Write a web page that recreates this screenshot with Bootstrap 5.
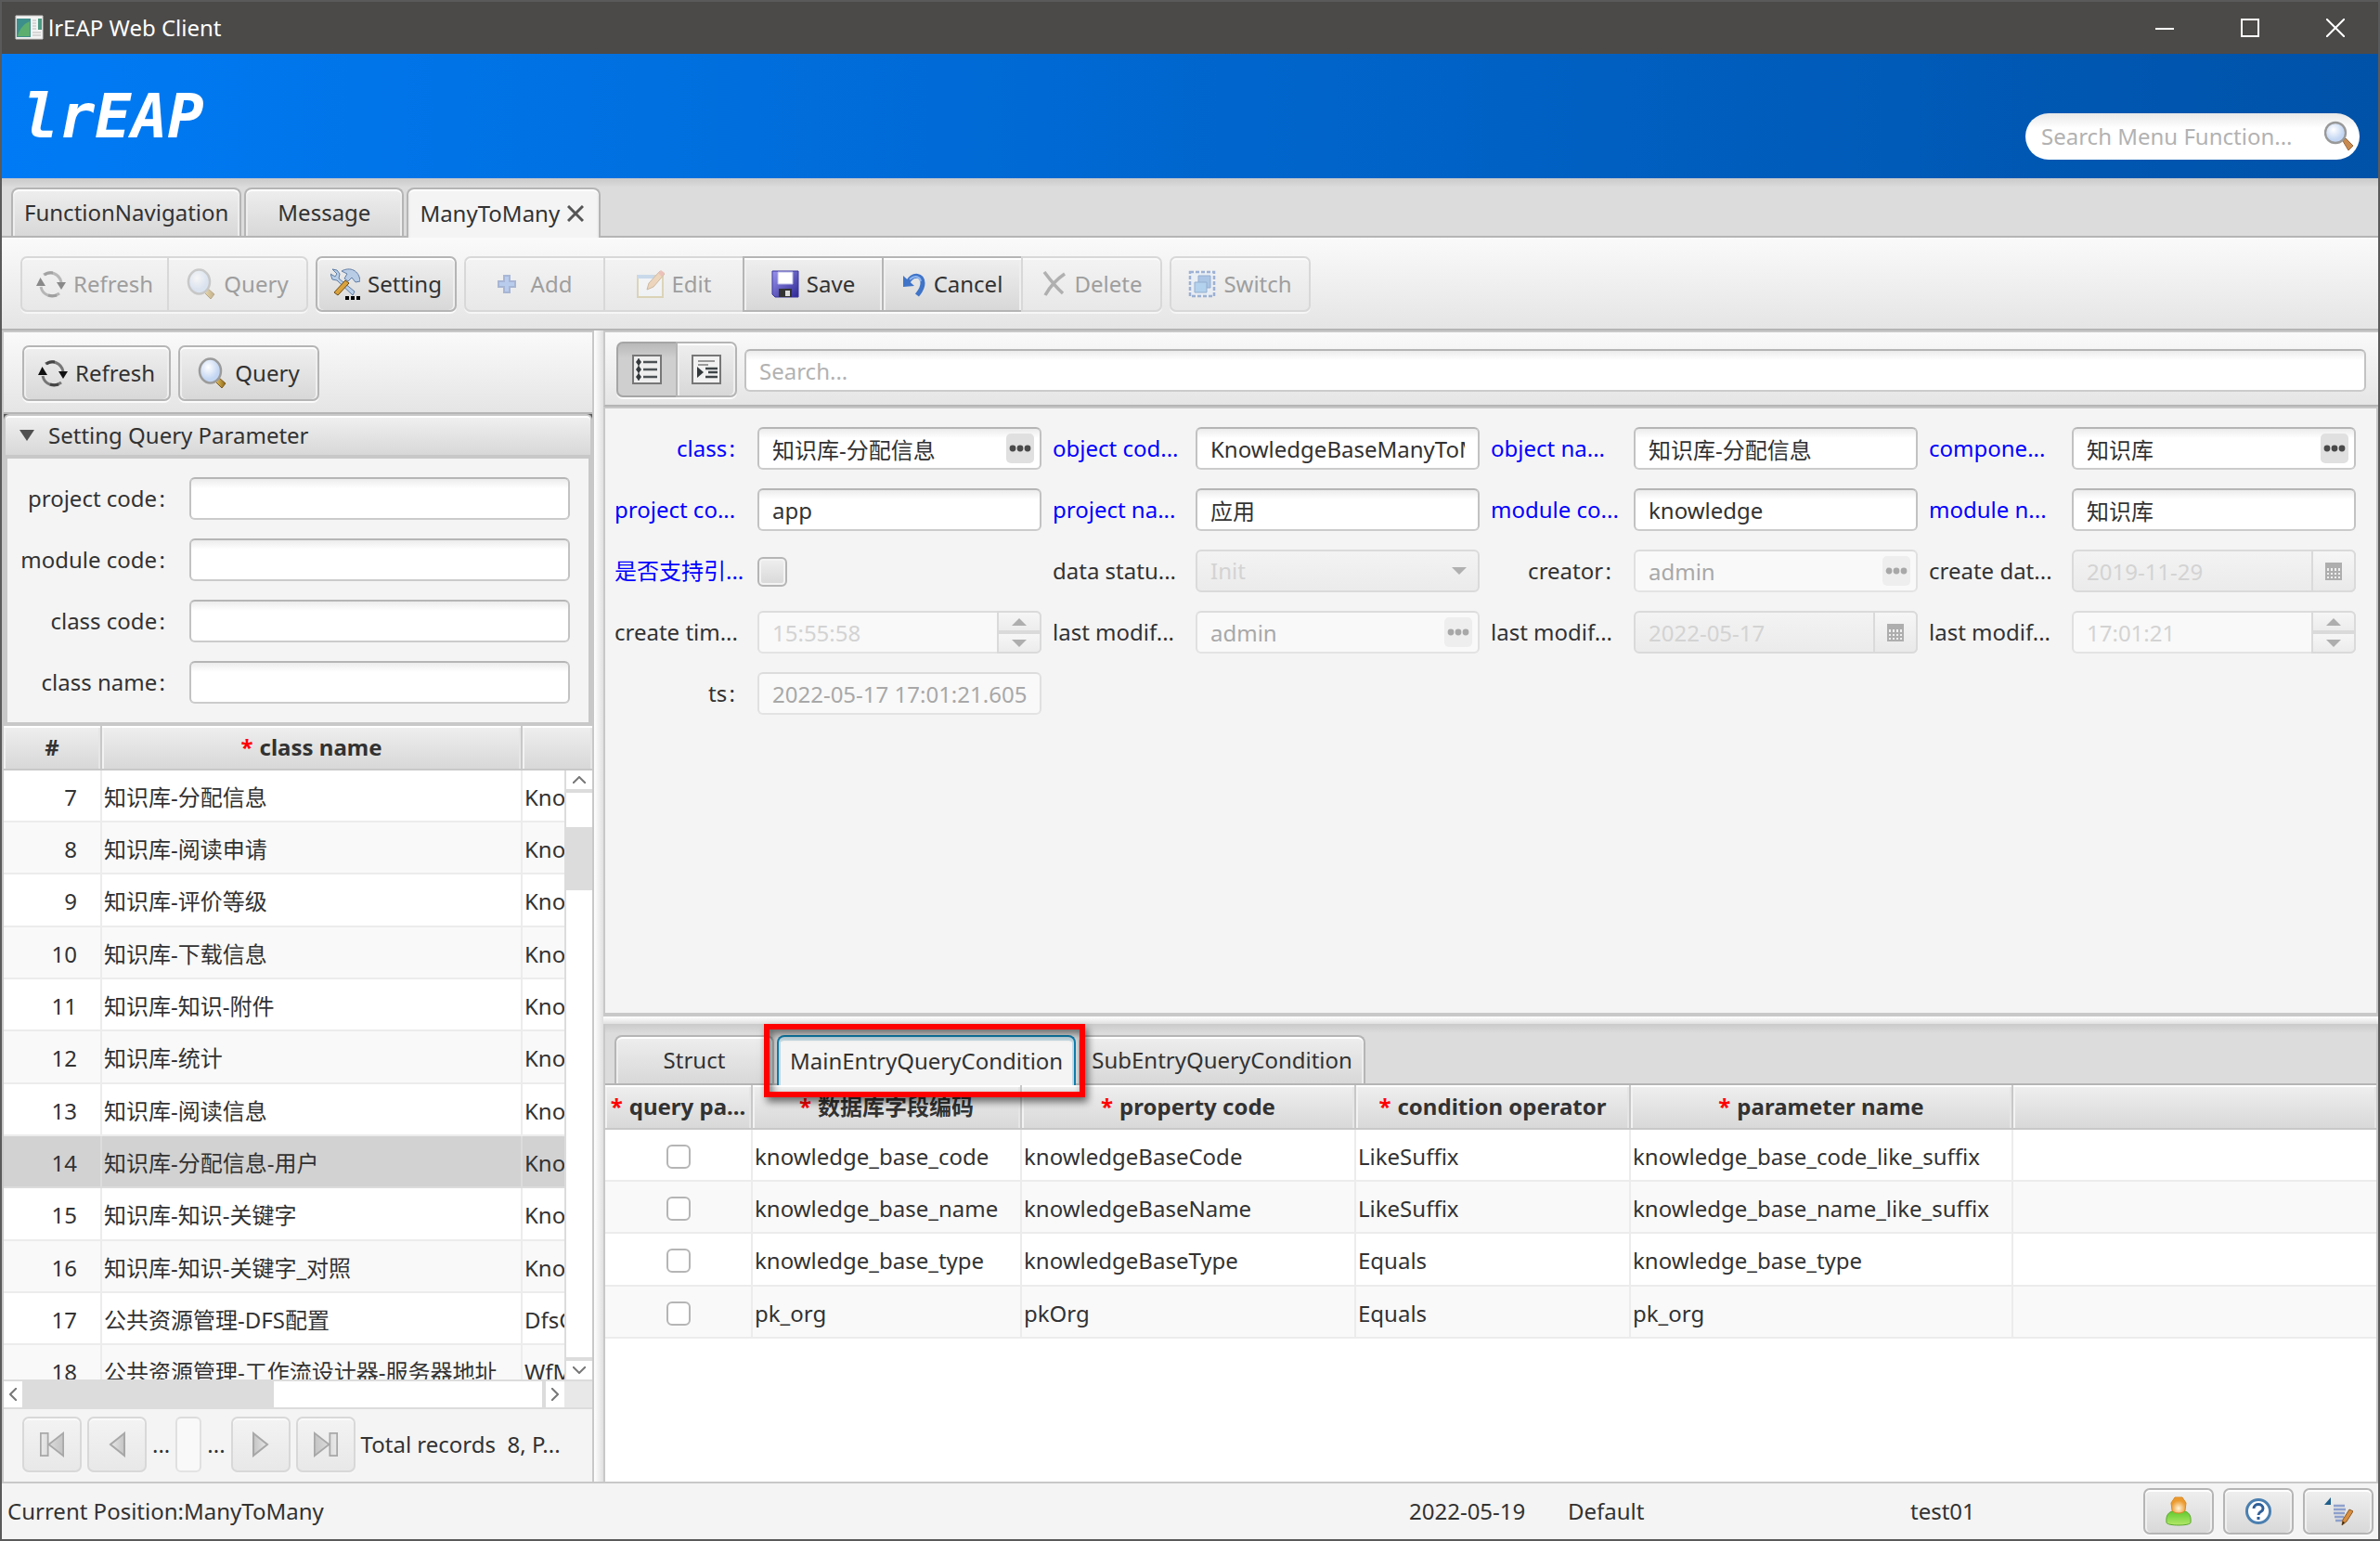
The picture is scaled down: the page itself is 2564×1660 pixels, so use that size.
<!DOCTYPE html>
<html lang="en">
<head>
<meta charset="utf-8">
<meta name="viewport" content="width=device-width, initial-scale=1">
<title>lrEAP Web Client</title>
<link href="https://cdn.jsdelivr.net/npm/bootstrap@5.3.0/dist/css/bootstrap.min.css" rel="stylesheet">
<style>
:root{--line:#c8c8c8;--edge:#b5b5b5;--panel:#f4f4f4;--ink:#323232}
body{font-family:"Noto Sans","Noto Sans CJK SC",sans-serif;font-size:24px;line-height:32px;color:var(--ink);background:#5a5a5a;border:solid #5a5a5a;border-width:0 2px 2px}
svg{display:block;flex:none}
/* window frame */
.titlebar{height:58px;background:#4c4a48;border-top:2px solid #5a5a5a;color:#fff;padding-left:12px}
.winbtn{width:92px;height:56px;background:none;border:0;color:#fff;display:flex;align-items:center;justify-content:center}
.brandbar{height:134px;background:linear-gradient(90deg,#007bf5,#0052a8);padding:0 20px 20px 22px}
.brandname{font:italic bold 65px/72px "DejaVu Sans Mono",monospace;color:#fff;margin-top:32px}
.menusearch{width:360px;height:50px;border-radius:25px;background:linear-gradient(#e8e8e8,#fff 16px);padding:0 6px 0 17px}
.menusearch input{border:0;background:none;outline:0;padding:0;min-width:0;flex:1;color:var(--ink)}
::placeholder{color:#b2b2b2!important;opacity:1!important}
/* tabs */
.tabstrip{background:linear-gradient(#cacaca,#dcdcdc 10px);border-bottom:2px solid var(--edge);gap:3px}
.tabstrip .nav-link{min-width:172px;height:52px;margin-bottom:0;padding:0 12px;border:2px solid var(--edge);border-bottom:0;border-radius:8px 8px 0 0;background:linear-gradient(#eee,#d8d8d8);box-shadow:inset 0 2px #fff,inset 2px 0 #eee,inset -2px 0 #eee;color:var(--ink);display:flex;align-items:center;justify-content:center}
.tabstrip .nav-link.active{height:54px;margin-bottom:-2px;background:var(--panel);border-color:var(--edge);color:var(--ink)}
.tabs-main{height:64px;padding:10px 10px 0}
.tabs-main .nav-link.active{padding-right:16px}
.tabs-sub{height:66px;padding:12px 10px 0}
.tabs-sub .nav-link.active{border-color:#0f7fae;box-shadow:inset 0 4px #c5dbe4,inset 2px 0 #c5dbe4,inset -2px 0 #c5dbe4}
/* toolbars and buttons */
.toolstrip{background:linear-gradient(#fafafa,#e5e5e5);border-bottom:2px solid var(--edge)}
.tools-main{height:100px;padding:20px}
.tools-left{height:88px;padding:14px 20px}
.tools-right{height:82px;padding:10px 13px 0 12px;border-top:2px solid var(--line);border-left:2px solid var(--line)}
.fxbtn{--bs-btn-padding-x:0;--bs-btn-padding-y:0;height:60px;border:2px solid var(--edge);border-radius:7px;background:linear-gradient(#efefef,#d8d8d8);box-shadow:inset 0 2px #fff,inset 2px 0 #efefef,inset -2px 0 #efefef,0 2px #fbfbfb;color:var(--ink);font-size:24px;line-height:32px;display:flex;align-items:center;justify-content:center;gap:8px}
.fxbtn:disabled{background:linear-gradient(#f3f3f3,#e8e8e8);border-color:#d8d8d8;color:#9e9e9e;opacity:1;box-shadow:inset 0 2px #fafafa,0 2px #f6f6f6}
.fxbtn:disabled svg{opacity:.45}
.btn-group .fxbtn{flex:none}
.btn-group>.fxbtn:not(:first-child){margin-left:-2px!important}
.fxbtn.pressed{background:linear-gradient(#b9b9b9,#cfcfcf 16px);box-shadow:0 2px #fbfbfb;border-color:#a5a5a5}
.w-tool{width:152px}
.w-wide{width:160px}
.w-toggle{width:66px}
/* fields */
.fld{height:46px;border:2px solid;border-color:#b5b5b5 #c2c2c2 #cbcbcb;border-radius:6px;background:linear-gradient(#ececec,#fff 10px);padding:0 14px;font-size:24px;line-height:32px;color:var(--ink)}
.fld:disabled{background:#f9f9f9;border-color:#dcdcdc #e0e0e0 #e3e3e3;color:#a8a8a8;opacity:1}
.fld.faint:disabled{color:#d3d3d3}
.fld.shade:disabled{background:linear-gradient(#f3f3f3,#ebebeb);border-color:#dadada}
.wrapfld{position:relative}
.dots{position:absolute;right:8px;top:7px;width:30px;height:32px;border:0;border-radius:5px;background:#e0e0e0;padding:0;display:flex;align-items:center;justify-content:center;color:#4a4a4a}
.dots:disabled{background:#eee;color:#a8a8a8}
.side{position:absolute;right:0;top:0;width:48px;height:46px;border:2px solid #dadada;border-radius:0 6px 6px 0;background:linear-gradient(#f6f6f6,#e9e9e9);padding:0;color:#aeaeae;display:flex;align-items:center;justify-content:center}
.steps{position:absolute;right:0;top:0;width:48px;height:46px;display:grid;grid-template-rows:1fr 1fr}
.steps button{border:2px solid #dadada;background:linear-gradient(#f6f6f6,#ececec);padding:0;color:#aeaeae;display:flex;align-items:center;justify-content:center}
.steps button:first-child{border-radius:0 6px 0 0}
.steps button:last-child{border-radius:0 0 6px 0}
.caret{position:absolute;right:14px;top:19px;color:#b0b0b0;pointer-events:none}
select.fld{appearance:none;-webkit-appearance:none;width:100%}
/* left side */
.leftpane{width:638px;border:solid var(--line);border-width:2px 2px 0}
.foldhead{height:44px;border:2px solid var(--line);border-bottom:0;border-radius:6px 6px 0 0;background:linear-gradient(#f0f0f0,#d8d8d8);box-shadow:inset 0 2px #fff;padding:0 0 0 15px;width:100%;text-align:left;display:flex;align-items:center;gap:15px;color:var(--ink);flex:none}
.foldbody{flex:none;border:4px solid var(--line);background:var(--panel);padding:20px 20px 20px 0;display:grid;grid-template-columns:170px 1fr;row-gap:20px;column-gap:26px}
.foldbody label{text-align:right;line-height:46px;white-space:nowrap}
.listarea{flex:1 1 0;min-height:0}
.splitv{width:10px;flex:none;background:linear-gradient(90deg,#fff,#e0e0e0)}
.splith{height:8px;background:linear-gradient(#fff,#e0e0e0);flex:none}
/* tables */
.grid{table-layout:fixed;width:100%;margin:0;border-collapse:separate;border-spacing:0}
.grid th{height:48px;padding:0 4px;text-align:center;font-weight:700;white-space:nowrap;background:linear-gradient(#efefef,#d8d8d8);border-right:2px solid var(--line);border-bottom:2px solid var(--line);box-shadow:inset 0 2px #fff,inset 2px 0 #f2f2f2,inset -2px 0 #e6e6e6}
.grid th:last-child{border-right:0}
.grid td{height:56px;padding:3px 2px 0;white-space:nowrap;overflow:hidden;border-bottom:2px solid #ececec;border-right:2px solid #ececec;background:#fff;line-height:32px;vertical-align:middle}
.grid td:last-child{border-right:0}
.grid tr:nth-child(3n) td{height:57px}
.grid tr:nth-child(even) td{background:#f9f9f9}
.grid tr.picked td{background:#d2d2d2;border-color:#dcdcdc}
.grid .num{text-align:right;padding-right:25px}
.req{color:#f00;margin-right:7px}
.cellcheck{width:26px;height:26px;border:2px solid #b5b5b5;border-radius:6px;background:#fff;display:block;margin:0 auto}
.bigcheck{width:32px;height:32px;margin:8px 0 0;border:2px solid #b5b5b5;border-radius:5px;background:linear-gradient(#efefef,#d8d8d8);box-shadow:inset 0 0 0 2px #f3f3f3}
/* scroll bars */
.vbar{position:absolute;right:0;top:48px;bottom:0;width:30px;background:#fff;border-left:2px solid #dcdcdc;display:flex;flex-direction:column}
.hbar{height:32px;border:solid #dcdcdc;border-width:2px 0;background:#fff;flex:none}
.barbtn{border:0 solid #dcdcdc;background:#fff;padding:0;color:#777;display:flex;align-items:center;justify-content:center}
.barbtn.v{height:24px}.barbtn.h{width:20px}
.barbtn.first{border-bottom-width:4px}
.barbtn.last{border-top-width:4px}
.barbtn.end{width:24px;border-left-width:4px}
.thumb{background:#dcdcdc}
.barcorner{width:30px;background:#e8e8e8}
.pager{height:78px;background:var(--panel);padding:8px 0 0 20px;gap:6px;align-items:flex-start}
.pager .fxbtn{width:64px;flex:none}
.pager .fxbtn svg{opacity:.6}
.pager span{line-height:60px;white-space:pre}
.pager input{width:28px;height:60px;padding:0;flex:none}
.mirror{transform:scaleX(-1)}
/* form */
.formpane{background:var(--panel);border:solid var(--line);border-width:2px 2px 4px;padding:20px 22px 0 10px}
.formgrid{display:grid;grid-template-columns:repeat(4,142px minmax(0,1fr));gap:20px 12px}
.formgrid label{line-height:46px;white-space:nowrap}
.formgrid label.short{text-align:right;padding-right:12px}
.must{color:#00f}
.upper{flex:3 1 0;min-height:0}.lower{flex:2 1 0;min-height:0;border:solid var(--line);border-width:0 2px}
.ring{position:absolute;left:-14px;right:-10px;top:-12px;height:79px;border:6px solid #f00;box-shadow:3px 5px 8px rgba(0,0,0,.55),inset 3px 5px 8px rgba(0,0,0,.5);z-index:3;pointer-events:none}
/* status */
.statusbar{height:62px;background:var(--panel);border-top:2px solid var(--line);flex:none;padding:0 5px 0 6px}
.statusbar .fxbtn{width:76px;height:50px}
.statusbtns{gap:10px}
.st-date{width:171px}.st-name{width:369px}.st-user{width:251px}
</style>
</head>
<body class="vh-100 d-flex flex-column overflow-hidden">
<svg width="0" height="0" class="position-absolute" aria-hidden="true">
<defs>
<radialGradient id="glass" cx=".4" cy=".35"><stop offset="0" stop-color="#fff"/><stop offset="1" stop-color="#c3d6f3"/></radialGradient>
<linearGradient id="gold" x1="0" x2="1"><stop offset="0" stop-color="#f2d06c"/><stop offset="1" stop-color="#8d6516"/></linearGradient>
<linearGradient id="disk" x1="0" y1="0" x2="1" y2="1"><stop offset="0" stop-color="#9a94ee"/><stop offset="1" stop-color="#2d2794"/></linearGradient>
<linearGradient id="green" x1="0" y1="0" x2="0" y2="1"><stop offset="0" stop-color="#5cc82b"/><stop offset="1" stop-color="#b4e86a"/></linearGradient>
<radialGradient id="face" cx=".5" cy=".7"><stop offset="0" stop-color="#fff3da"/><stop offset="1" stop-color="#ec9a2e"/></radialGradient>
<linearGradient id="steel" x1="0" y1="0" x2="1" y2="0"><stop offset="0" stop-color="#e8e8e8"/><stop offset="1" stop-color="#a8a8a8"/></linearGradient>
</defs>
<symbol id="i-refresh" viewBox="0 0 32 32"><g fill="none" stroke-width="3"><path d="M8 6c7-5 17-1 19 8" stroke="#777"/><path d="M25 26c-8 6-18 2-20-7" stroke="#777"/><path d="M9 6c3-2 6-2.500 9-2" stroke="#444"/><path d="M22 28c-3 1-6 1-9 0" stroke="#444"/></g><path d="M0 18l4.500-9 5.500 9zM22 14h10l-5 8z" fill="#111"/></symbol>
<symbol id="i-query" viewBox="0 0 32 34"><path d="M18 25l5-3 7 6-4 5z" fill="url(#gold)" stroke="#7d5a1a"/><ellipse cx="13.500" cy="14.500" rx="11.500" ry="13" fill="url(#glass)" stroke="#9b9b9b" stroke-width="2.500"/></symbol>
<symbol id="i-lens" viewBox="0 0 32 34"><path d="M20 22l3-3 8 8-5 5z" fill="#c98a50" stroke="#9a6a3c"/><circle cx="12" cy="13" r="11" fill="url(#glass)" stroke="#999" stroke-width="2.400"/></symbol>
<symbol id="i-setting" viewBox="0 0 32 34"><path d="M2 1l5 1 3 4-1 5 17 14-2 4L7 13l-5-1-2-6 5 3 2-3z" fill="#b9cfe8" stroke="#5f7da4"/><path d="M12 3c9-5 19-1 20 11l-5 1-4-5-4 4-4-3 3-5z" fill="#b9cce6" stroke="#5f7da4"/><path d="M16 13l4 3L8 29l-4-3z" fill="#d9a23c" stroke="#6d4a12"/><path d="M16 30h4v4h-4zM22 30h4v4h-4zM28 30h4v4h-4z" fill="#000"/></symbol>
<symbol id="i-add" viewBox="0 0 20 20"><path d="M7 1h6v6h6v6h-6v6H7v-6H1V7h6z" fill="#7aa5ee" stroke="#5674b8" stroke-width="2"/></symbol>
<symbol id="i-edit" viewBox="0 0 30 30"><path d="M1 6h27v23H1z" fill="#f6fbff" stroke="#c9b87a" stroke-width="2"/><path d="M1 5h18v4H1z" fill="#9cc0e6"/><path d="M11 21l2-7L25 1l5 3-12 14z" fill="#eab880" stroke="#a87a48"/><path d="M23 3l3-3 4 3-3 4z" fill="#e88a7a"/></symbol>
<symbol id="i-save" viewBox="0 0 30 30"><path d="M1 1h28v28H4l-3-3z" fill="url(#disk)" stroke="#3a35a0"/><path d="M7 2h16v13H7z" fill="#fff" stroke="#b6b6e6"/><path d="M8 20h14v9H8z" fill="#333"/><path d="M15 22h5v6h-5z" fill="#ddd"/></symbol>
<symbol id="i-cancel" viewBox="0 0 26 28"><path d="M6 12C12 2 22 4 22 13c0 6-3 9-6 13" fill="none" stroke="#3f74c8" stroke-width="5"/><path d="M1 5v12l12-1z" fill="#3f74c8"/><path d="M8 9c6-5 11-3 12 2" fill="none" stroke="#8fb6f0" stroke-width="2"/></symbol>
<symbol id="i-delete" viewBox="0 0 28 28"><path d="M3 1c6 8 12 16 20 23M25 3C16 9 9 17 4 26" fill="none" stroke="#666" stroke-width="3.500"/></symbol>
<symbol id="i-switch" viewBox="0 0 30 30"><path d="M2 2h26v26H2z" fill="#e4effd" stroke="#3c69b8" stroke-width="2.500" stroke-dasharray="4 2"/><path d="M11 6h13v13H11z" fill="#5b94dc" stroke="#2d63ad"/><path d="M7 13h13v11H7z" fill="#6eb2ee" stroke="#2d63ad"/></symbol>
<symbol id="i-first" viewBox="0 0 30 30"><path d="M1 1h9v28H1zM29 1v28L11 15z" fill="url(#steel)" stroke="#7a7a7a" stroke-width="2"/></symbol>
<symbol id="i-prev" viewBox="0 0 18 28"><path d="M17 2v24L2 14z" fill="url(#steel)" stroke="#7a7a7a" stroke-width="2"/></symbol>
<symbol id="i-dots" viewBox="0 0 24 8"><circle cx="4" cy="4" r="3.400"/><circle cx="12" cy="4" r="3.400"/><circle cx="20" cy="4" r="3.400"/></symbol>
<symbol id="i-cal" viewBox="0 0 18 19"><path fill-rule="evenodd" d="M0 0h18v19H0zM2 6h2v3H2zm4 0h2v3H6zm4 0h2v3h-2zm4 0h2v3h-2zM2 11h2v2H2zm4 0h2v2H6zm4 0h2v2h-2zm4 0h2v2h-2zM2 15h2v2H2zm4 0h2v2H6zm4 0h2v2h-2zm4 0h2v2h-2z" fill="currentColor"/></symbol>
<symbol id="i-up" viewBox="0 0 16 8"><path d="M0 8l8-8 8 8z" fill="currentColor"/></symbol>
<symbol id="i-down" viewBox="0 0 16 8"><path d="M0 0l8 8 8-8z" fill="currentColor"/></symbol>
</svg>

<header class="flex-shrink-0">
<div class="titlebar d-flex align-items-center">
<svg width="34" height="28" viewBox="0 0 34 28" class="me-1"><path d="M3 1h29v25H3z" fill="#f3f3f3" stroke="#ccc"/><path d="M4 4h15v20H4z" fill="#3d8f8c"/><path d="M5 23c2-9 8-14 13-16v16z" fill="#5cae6e"/><path d="M27 4h4v12h-4z" fill="#4b9a80"/><path d="M21 6h4M21 9h4M21 12h4M21 15h4M21 19h9M21 22h9" stroke="#bbb"/></svg>
<span>lrEAP Web Client</span>
<div class="d-flex ms-auto">
<button class="winbtn" aria-label="Minimize"><svg width="20" height="20"><path d="M0 11h20" stroke="#fff" stroke-width="2"/></svg></button>
<button class="winbtn" aria-label="Maximize"><svg width="20" height="20"><path d="M1 1h18v18H1z" fill="none" stroke="#fff" stroke-width="2"/></svg></button>
<button class="winbtn" aria-label="Close"><svg width="20" height="20"><path d="M0 0l20 20M20 0L0 20" stroke="#fff" stroke-width="2"/></svg></button>
</div>
</div>
<div class="brandbar d-flex align-items-end justify-content-between">
<div class="brandname align-self-start">lrEAP</div>
<div class="menusearch d-flex align-items-center"><input type="text" aria-label="Search Menu Function" placeholder="Search Menu Function..."><svg width="32" height="34"><use href="#i-lens"/></svg></div>
</div>
</header>

<nav class="nav nav-tabs tabstrip tabs-main flex-shrink-0 flex-nowrap">
<a class="nav-link" href="#">FunctionNavigation</a>
<a class="nav-link" href="#">Message</a>
<a class="nav-link active gap-2" href="#" aria-current="page">ManyToMany <svg width="18" height="18"><path d="M1 1l16 16M17 1L1 17" stroke="#555" stroke-width="3"/></svg></a>
</nav>

<div class="toolstrip tools-main d-flex align-items-start flex-shrink-0 gap-2">
<div class="btn-group">
<button class="btn fxbtn w-wide" disabled><svg width="32" height="32"><use href="#i-refresh"/></svg>Refresh</button>
<button class="btn fxbtn w-tool" disabled><svg width="32" height="34"><use href="#i-query"/></svg>Query</button>
</div>
<button class="btn fxbtn w-tool"><svg width="32" height="34"><use href="#i-setting"/></svg>Setting</button>
<div class="btn-group">
<button class="btn fxbtn w-tool" disabled><svg width="20" height="20" class="me-2"><use href="#i-add"/></svg>Add</button>
<button class="btn fxbtn w-tool" disabled><svg width="30" height="30"><use href="#i-edit"/></svg>Edit</button>
<button class="btn fxbtn w-tool"><svg width="30" height="30"><use href="#i-save"/></svg>Save</button>
<button class="btn fxbtn w-tool"><svg width="26" height="28"><use href="#i-cancel"/></svg>Cancel</button>
<button class="btn fxbtn w-tool" disabled><svg width="28" height="28"><use href="#i-delete"/></svg>Delete</button>
</div>
<button class="btn fxbtn w-tool" disabled><svg width="30" height="30"><use href="#i-switch"/></svg>Switch</button>
</div>

<main class="d-flex flex-grow-1" style="min-height:0">
<section class="leftpane d-flex flex-column flex-shrink-0">
<div class="toolstrip tools-left d-flex align-items-start gap-2 flex-shrink-0">
<button class="btn fxbtn w-wide"><svg width="32" height="32"><use href="#i-refresh"/></svg>Refresh</button>
<button class="btn fxbtn w-tool"><svg width="32" height="34"><use href="#i-query"/></svg>Query</button>
</div>
<button class="foldhead" aria-expanded="true"><svg width="16" height="12"><path d="M0 0h16l-8 12z" fill="#505050"/></svg>Setting Query Parameter</button>
<div class="foldbody">
<label for="q1">project code&#8202;:</label><input id="q1" class="form-control fld">
<label for="q2">module code&#8202;:</label><input id="q2" class="form-control fld">
<label for="q3">class code&#8202;:</label><input id="q3" class="form-control fld">
<label for="q4">class name&#8202;:</label><input id="q4" class="form-control fld">
</div>
<div class="listarea position-relative overflow-hidden bg-white">
<table class="grid">
<colgroup><col style="width:106px"><col style="width:453px"><col></colgroup>
<thead><tr><th>#</th><th><span class="req">*</span>class name</th><th></th></tr></thead>
<tbody>
<tr><td class="num">7</td><td>知识库-分配信息</td><td>Kno</td></tr>
<tr><td class="num">8</td><td>知识库-阅读申请</td><td>Kno</td></tr>
<tr><td class="num">9</td><td>知识库-评价等级</td><td>Kno</td></tr>
<tr><td class="num">10</td><td>知识库-下载信息</td><td>Kno</td></tr>
<tr><td class="num">11</td><td>知识库-知识-附件</td><td>Kno</td></tr>
<tr><td class="num">12</td><td>知识库-统计</td><td>Kno</td></tr>
<tr><td class="num">13</td><td>知识库-阅读信息</td><td>Kno</td></tr>
<tr class="picked"><td class="num">14</td><td>知识库-分配信息-用户</td><td>Kno</td></tr>
<tr><td class="num">15</td><td>知识库-知识-关键字</td><td>Kno</td></tr>
<tr><td class="num">16</td><td>知识库-知识-关键字_对照</td><td>Kno</td></tr>
<tr><td class="num">17</td><td>公共资源管理-DFS配置</td><td>DfsC</td></tr>
<tr><td class="num">18</td><td>公共资源管理-工作流设计器-服务器地址</td><td>WfM</td></tr>
</tbody>
</table>
<div class="vbar">
<button class="barbtn v first" aria-label="Scroll up"><svg width="14" height="8"><path d="M0 8l7-7 7 7" fill="none" stroke="currentColor" stroke-width="2"/></svg></button>
<div style="height:37px"></div><div class="thumb" style="height:68px"></div><div class="flex-grow-1"></div>
<button class="barbtn v last" aria-label="Scroll down"><svg width="14" height="8"><path d="M0 0l7 7 7-7" fill="none" stroke="currentColor" stroke-width="2"/></svg></button>
</div>
</div>
<div class="hbar d-flex">
<button class="barbtn h" aria-label="Scroll left"><svg width="8" height="14"><path d="M8 0L1 7l7 7" fill="none" stroke="currentColor" stroke-width="2"/></svg></button>
<div class="thumb" style="width:271px"></div><div class="flex-grow-1"></div>
<button class="barbtn h end" aria-label="Scroll right"><svg width="8" height="14"><path d="M0 0l7 7-7 7" fill="none" stroke="currentColor" stroke-width="2"/></svg></button>
<div class="barcorner"></div>
</div>
<div class="pager d-flex flex-shrink-0">
<button class="btn fxbtn" disabled aria-label="First page"><svg width="26" height="30"><use href="#i-first"/></svg></button>
<button class="btn fxbtn" disabled aria-label="Previous page"><svg width="18" height="28"><use href="#i-prev"/></svg></button>
<span>...</span><input class="form-control fld" disabled aria-label="Page"><span>...</span>
<button class="btn fxbtn" disabled aria-label="Next page"><svg class="mirror" width="18" height="28"><use href="#i-prev"/></svg></button>
<button class="btn fxbtn" disabled aria-label="Last page"><svg class="mirror" width="26" height="30"><use href="#i-first"/></svg></button>
<span>Total records  8, P...</span>
</div>
</section>
<div class="splitv"></div>
<section class="d-flex flex-column flex-grow-1" style="min-width:0">
<div class="upper d-flex flex-column">
<div class="toolstrip tools-right d-flex align-items-start flex-shrink-0">
<div class="btn-group me-2 flex-shrink-0">
<button class="btn fxbtn pressed w-toggle" aria-label="List view"><svg width="32" height="32" viewBox="0 0 32 32"><path d="M1 1h30v30H1z" fill="#eee" stroke="#777" stroke-width="2"/><path d="M12 8h15M12 16h15M12 24h15" stroke="#4c5254" stroke-width="2.600"/><path d="M7 4v24" stroke="#4c5254"/><path d="M7 4l3 4-3 4-3-4zM7 12l3 4-3 4-3-4zM7 20l3 4-3 4-3-4z" fill="#33393b"/></svg></button>
<button class="btn fxbtn w-toggle" aria-label="Card view"><svg width="32" height="32" viewBox="0 0 32 32"><path d="M1 1h30v30H1z" fill="#f2f2f2" stroke="#777" stroke-width="2"/><path d="M7 7h18M7 11h11" stroke="#999" stroke-width="2"/><path d="M15 15h13M18 19h10M15 24h13" stroke="#3f4547" stroke-width="2.400"/><path d="M6 13l7 6-7 6z" fill="#33393b"/></svg></button>
</div>
<input class="form-control fld mt-2" aria-label="Search" placeholder="Search...">
</div>
<div class="formpane flex-grow-1">
<form class="formgrid">
<label class="short must" for="f1">class&#8202;:</label><div class="wrapfld"><input id="f1" class="form-control fld" value="知识库-分配信息"><button type="button" class="dots" aria-label="Choose"><svg width="24" height="8" fill="currentColor"><use href="#i-dots"/></svg></button></div>
<label class="must" for="f2">object cod...</label><input id="f2" class="form-control fld" value="KnowledgeBaseManyToMany">
<label class="must" for="f3">object na...</label><input id="f3" class="form-control fld" value="知识库-分配信息">
<label class="must" for="f4">compone...</label><div class="wrapfld"><input id="f4" class="form-control fld" value="知识库"><button type="button" class="dots" aria-label="Choose"><svg width="24" height="8" fill="currentColor"><use href="#i-dots"/></svg></button></div>

<label class="must" for="f5">project co...</label><input id="f5" class="form-control fld" value="app">
<label class="must" for="f6">project na...</label><input id="f6" class="form-control fld" value="应用">
<label class="must" for="f7">module co...</label><input id="f7" class="form-control fld" value="knowledge">
<label class="must" for="f8">module n...</label><input id="f8" class="form-control fld" value="知识库">

<label class="must" for="f9">是否支持引...</label><div><input id="f9" type="checkbox" class="form-check-input bigcheck"></div>
<label for="f10">data statu...</label><div class="wrapfld"><select id="f10" class="fld shade faint" disabled><option>Init</option></select><svg class="caret" width="16" height="8"><use href="#i-down"/></svg></div>
<label class="short" for="f11">creator&#8202;:</label><div class="wrapfld"><input id="f11" class="form-control fld" value="admin" disabled><button type="button" class="dots" disabled aria-label="Choose"><svg width="24" height="8" fill="currentColor"><use href="#i-dots"/></svg></button></div>
<label for="f12">create dat...</label><div class="wrapfld"><input id="f12" class="form-control fld shade faint" value="2019-11-29" disabled><button type="button" class="side" disabled aria-label="Pick date"><svg width="18" height="19"><use href="#i-cal"/></svg></button></div>

<label for="f13">create tim...</label><div class="wrapfld"><input id="f13" class="form-control fld faint" value="15:55:58" disabled><div class="steps"><button type="button" disabled aria-label="Up"><svg width="16" height="8"><use href="#i-up"/></svg></button><button type="button" disabled aria-label="Down"><svg width="16" height="8"><use href="#i-down"/></svg></button></div></div>
<label for="f14">last modif...</label><div class="wrapfld"><input id="f14" class="form-control fld" value="admin" disabled><button type="button" class="dots" disabled aria-label="Choose"><svg width="24" height="8" fill="currentColor"><use href="#i-dots"/></svg></button></div>
<label for="f15">last modif...</label><div class="wrapfld"><input id="f15" class="form-control fld shade faint" value="2022-05-17" disabled><button type="button" class="side" disabled aria-label="Pick date"><svg width="18" height="19"><use href="#i-cal"/></svg></button></div>
<label for="f16">last modif...</label><div class="wrapfld"><input id="f16" class="form-control fld faint" value="17:01:21" disabled><div class="steps"><button type="button" disabled aria-label="Up"><svg width="16" height="8"><use href="#i-up"/></svg></button><button type="button" disabled aria-label="Down"><svg width="16" height="8"><use href="#i-down"/></svg></button></div></div>

<label class="short" for="f17">ts&#8202;:</label><input id="f17" class="form-control fld" value="2022-05-17 17:01:21.605" disabled>
</form>
</div>
</div>
<div class="splith"></div>
<div class="lower d-flex flex-column bg-white">
<nav class="nav nav-tabs tabstrip tabs-sub flex-shrink-0 flex-nowrap">
<a class="nav-link" href="#">Struct</a>
<div class="position-relative"><a class="nav-link active" href="#" aria-current="true">MainEntryQueryCondition</a><div class="ring"></div></div>
<a class="nav-link" href="#">SubEntryQueryCondition</a>
</nav>
<table class="grid">
<colgroup><col style="width:159px"><col style="width:290px"><col style="width:360px"><col style="width:296px"><col style="width:412px"><col></colgroup>
<thead><tr><th><span class="req">*</span>query pa...</th><th><span class="req">*</span>数据库字段编码</th><th><span class="req">*</span>property code</th><th><span class="req">*</span>condition operator</th><th><span class="req">*</span>parameter name</th><th></th></tr></thead>
<tbody>
<tr><td><input type="checkbox" class="form-check-input cellcheck" aria-label="query parameter 1"></td><td>knowledge_base_code</td><td>knowledgeBaseCode</td><td>LikeSuffix</td><td>knowledge_base_code_like_suffix</td><td></td></tr>
<tr><td><input type="checkbox" class="form-check-input cellcheck" aria-label="query parameter 2"></td><td>knowledge_base_name</td><td>knowledgeBaseName</td><td>LikeSuffix</td><td>knowledge_base_name_like_suffix</td><td></td></tr>
<tr><td><input type="checkbox" class="form-check-input cellcheck" aria-label="query parameter 3"></td><td>knowledge_base_type</td><td>knowledgeBaseType</td><td>Equals</td><td>knowledge_base_type</td><td></td></tr>
<tr><td><input type="checkbox" class="form-check-input cellcheck" aria-label="query parameter 4"></td><td>pk_org</td><td>pkOrg</td><td>Equals</td><td>pk_org</td><td></td></tr>
</tbody>
</table>
</div>
</section>
</main>

<footer class="statusbar d-flex align-items-center">
<span class="flex-grow-1">Current Position:ManyToMany</span>
<span class="st-date">2022-05-19</span><span class="st-name">Default</span><span class="st-user">test01</span>
<div class="d-flex statusbtns">
<button class="btn fxbtn" aria-label="User"><svg width="28" height="32" viewBox="0 0 28 32"><path d="M1 28c-1-9 3-13 13-13s14 4 13 13c0 4-26 4-26 0z" fill="url(#green)" stroke="#58a82c"/><path d="M10 1h8l4 6-1 8c-2 4-12 4-14 0L6 7z" fill="url(#face)" stroke="#d98a26"/></svg></button>
<button class="btn fxbtn" aria-label="Help"><svg width="30" height="30" viewBox="0 0 30 30"><circle cx="15" cy="15" r="12.500" fill="#fff" stroke="#4a7fb0" stroke-width="3"/><path d="M10 12c0-6 10-6 10 0 0 4-5 3-5 7M15 21v3" fill="none" stroke="#2f5f98" stroke-width="3"/></svg></button>
<button class="btn fxbtn" aria-label="Notes"><svg width="32" height="32" viewBox="0 0 32 32"><path d="M1 9L8 1v8z" fill="#1f5f8c"/><path d="M11 10h12M11 14h13M11 18h12M12 22h10M13 26h8" stroke="#8ea0cc" stroke-width="2.400"/><path d="M20 31l1-6 7-11 4 2-7 11z" fill="#d98e40" stroke="#8b5a22"/><path d="M20 31l1-4 2 1z" fill="#222"/></svg></button>
</div>
</footer>
<script src="https://cdn.jsdelivr.net/npm/bootstrap@5.3.0/dist/js/bootstrap.bundle.min.js"></script>
</body>
</html>
